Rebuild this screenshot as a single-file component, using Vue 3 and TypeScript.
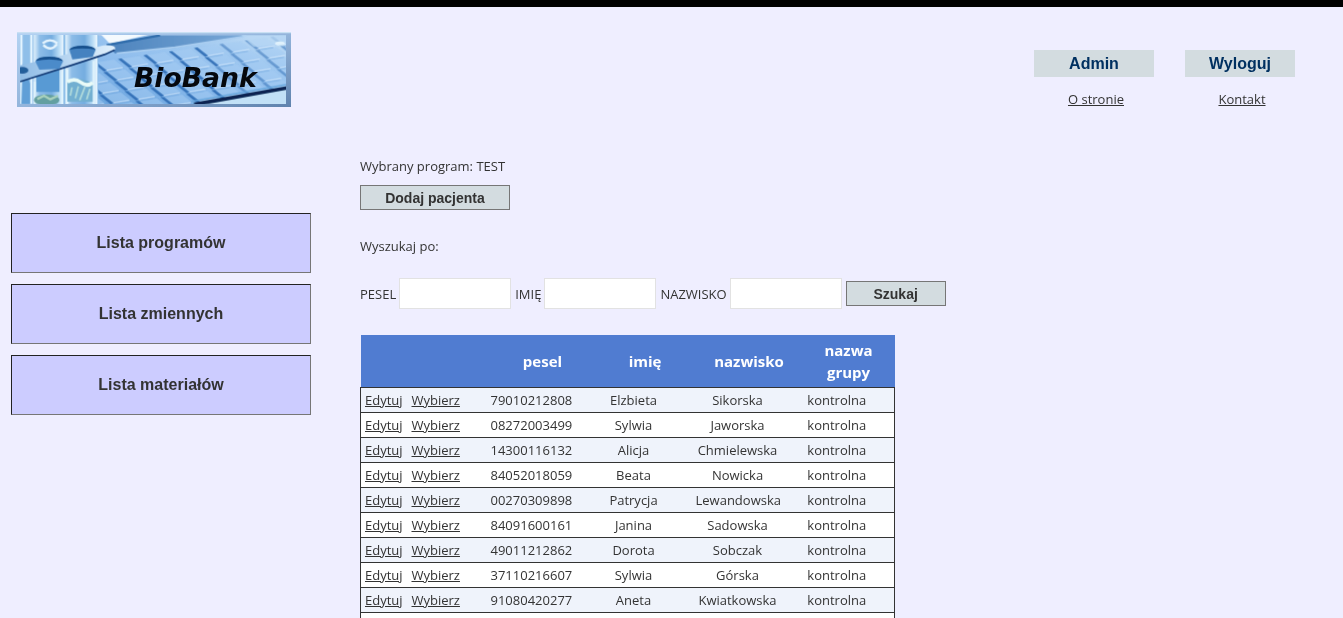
<script setup lang="ts">
import { ref } from 'vue'

interface Patient {
  pesel: string
  firstName: string
  lastName: string
  group: string
}

const menu: string[] = ['Lista programów', 'Lista zmiennych', 'Lista materiałów']

const patients: Patient[] = [
  { pesel: '79010212808', firstName: 'Elzbieta', lastName: 'Sikorska', group: 'kontrolna' },
  { pesel: '08272003499', firstName: 'Sylwia', lastName: 'Jaworska', group: 'kontrolna' },
  { pesel: '14300116132', firstName: 'Alicja', lastName: 'Chmielewska', group: 'kontrolna' },
  { pesel: '84052018059', firstName: 'Beata', lastName: 'Nowicka', group: 'kontrolna' },
  { pesel: '00270309898', firstName: 'Patrycja', lastName: 'Lewandowska', group: 'kontrolna' },
  { pesel: '84091600161', firstName: 'Janina', lastName: 'Sadowska', group: 'kontrolna' },
  { pesel: '49011212862', firstName: 'Dorota', lastName: 'Sobczak', group: 'kontrolna' },
  { pesel: '37110216607', firstName: 'Sylwia', lastName: 'Górska', group: 'kontrolna' },
  { pesel: '91080420277', firstName: 'Aneta', lastName: 'Kwiatkowska', group: 'kontrolna' },
]

const pesel = ref('')
const firstName = ref('')
const lastName = ref('')

// Keyboard keys of the banner, laid out in perspective from the upper left.
const keys: { x: number; y: number; fade: number }[] = []
for (let row = 0; row < 7; row++) {
  for (let col = -4; col < 8; col++) {
    const x = 360 + col * 76 + row * 32
    keys.push({ x, y: 180 - col * 11 + row * 29, fade: x > 640 ? 0.5 : 0.9 })
  }
}
</script>

<template>
  <div class="page">
    <header class="top">
      <a href="#" class="brand" aria-label="BioBank">
        <svg class="logo" viewBox="51 96 822 225" role="img" aria-label="BioBank">
          <defs>
            <linearGradient id="frame" x1="0" y1="0" x2="1" y2="1">
              <stop offset="0" stop-color="#b4d3f3" />
              <stop offset="0.5" stop-color="#94b5dc" />
              <stop offset="1" stop-color="#5f82ad" />
            </linearGradient>
            <linearGradient id="board" x1="0" y1="1" x2="1" y2="0">
              <stop offset="0" stop-color="#5c9bd8" />
              <stop offset="0.5" stop-color="#8dbced" />
              <stop offset="0.75" stop-color="#9fc8f0" />
              <stop offset="1" stop-color="#c4def6" />
            </linearGradient>
            <linearGradient id="tube" x1="0" y1="0" x2="1" y2="0">
              <stop offset="0" stop-color="#e4f3fd" />
              <stop offset="0.2" stop-color="#8dbde8" />
              <stop offset="0.6" stop-color="#75ade0" />
              <stop offset="0.85" stop-color="#b8dcf6" />
              <stop offset="1" stop-color="#eef8ff" />
            </linearGradient>
            <linearGradient id="rack" x1="0" y1="0" x2="1" y2="0">
              <stop offset="0" stop-color="#8fbce6" />
              <stop offset="1" stop-color="#e2f1fd" />
            </linearGradient>
            <linearGradient id="lid" x1="0" y1="0" x2="1" y2="0">
              <stop offset="0" stop-color="#4c83bd" />
              <stop offset="1" stop-color="#7aa9d8" />
            </linearGradient>
            <filter id="soft" x="-5%" y="-5%" width="110%" height="110%">
              <feGaussianBlur stdDeviation="2" />
            </filter>
            <clipPath id="photo"><rect x="60" y="107" width="798" height="205" /></clipPath>
          </defs>
          <rect x="51" y="96" width="822" height="225" fill="url(#frame)" />
          <path d="M51 98H873" stroke="#c9e0f3" stroke-width="4" />
          <g clip-path="url(#photo)">
            <rect x="60" y="107" width="798" height="205" fill="url(#board)" />
            <g filter="url(#soft)">
              <g v-for="(key, i) in keys" :key="i" :transform="`translate(${key.x} ${key.y})`">
                <path d="M6 -4L58 -12L86 10L36 19Z" fill="#a6ccf3" opacity="0.55" />
                <path d="M36 20L84 12" stroke="#c8e0f8" stroke-width="4" opacity="0.8" />
                <path d="M36 25L80 18" stroke="#6ba3dc" stroke-width="3" opacity="0.7" />
                <path d="M-6 -3L4 -5L36 20L28 24Z" fill="#2d6bb4" :opacity="key.fade" />
              </g>
              <path d="M300 100H460L330 132Z" fill="#f4fafe" />
              <path d="M318 134L470 106H745L525 144L345 160Z" fill="url(#lid)" />
              <path d="M320 135L480 106" stroke="#2f6cab" stroke-width="7" />
              <path d="M350 160L525 142L740 108" fill="none" stroke="#a9cdf0" stroke-width="5" />
              <path d="M720 100H870V130L760 140Z" fill="#b8d7f3" opacity="0.7" />
              <ellipse cx="840" cy="130" rx="15" ry="6" fill="#e0f1fc" />
              <path d="M575 318L870 263V325H575Z" fill="#c1e0f6" />
              <path d="M580 308L865 258V268L590 318Z" fill="#082451" />
              <path d="M575 304L862 253" stroke="#66a6dc" stroke-width="4" />

              <rect x="55" y="100" width="240" height="220" fill="#8fbfe9" />
              <path d="M64 100V312M94 100V312" stroke="#e3f4ff" stroke-width="7" />
              <path d="M68 190L90 250V312H64Z" fill="#609fd7" />
              <rect x="101" y="100" width="89" height="215" fill="url(#tube)" />
              <rect x="196" y="100" width="96" height="215" fill="url(#tube)" />
              <path d="M128 130Q150 112 172 130M130 135Q153 157 171 132" fill="none" stroke="#e6f5fe" stroke-width="7" />
              <path d="M109 208L178 185V276H109Z" fill="#589ad4" />
              <path d="M60 196L310 136Q350 134 345 148Q335 157 60 245Z" fill="url(#rack)" />
              <path d="M60 245L205 199L315 163L344 150" fill="none" stroke="#173f79" stroke-width="5" />
              <path d="M106 184Q112 171 147 171Q183 171 189 184L178 207L118 209Z" fill="#4b8bca" />
              <path d="M107 183Q112 170 147 170Q183 170 189 183Q148 174 107 183Z" fill="#174f8c" />
              <path d="M208 149Q216 138 248 138Q280 138 287 149L278 171L217 178Z" fill="#4482c0" />
              <path d="M208 149Q216 137 248 137Q280 137 287 149Q248 141 208 149Z" fill="#174f8c" />
              <ellipse cx="67" cy="211" rx="18" ry="10" fill="#245e9b" />
              <path d="M104 245V310M187 216V312M202 208V312M281 183V312" stroke="#e1f4fd" stroke-width="6" />
              <path d="M202 246Q235 225 278 250V305H202Z" fill="#72afd1" />
              <path d="M202 246Q223 232 242 247T278 248" fill="none" stroke="#e9fbf8" stroke-width="11" />
              <path d="M216 262L211 287M235 259L226 295M255 260L239 301M270 266L260 298" stroke="#b4dddd" stroke-width="5" />
              <ellipse cx="140" cy="300" rx="38" ry="17" fill="#649fa1" />
              <path d="M112 297L132 287L151 298L174 287" fill="none" stroke="#a9d2bd" stroke-width="7" />
            </g>
          </g>
          <text x="402" y="262" class="logo-text">BioBank</text>
        </svg>
      </a>
      <nav class="account" aria-label="Konto">
        <div class="account-col">
          <button type="button" class="account-btn admin">Admin</button>
          <a href="#">O stronie</a>
        </div>
        <div class="account-col">
          <button type="button" class="account-btn logout">Wyloguj</button>
          <a href="#">Kontakt</a>
        </div>
      </nav>
    </header>

    <div class="body">
      <nav class="sidebar" aria-label="Menu">
        <button v-for="item in menu" :key="item" type="button" class="menu-btn">{{ item }}</button>
      </nav>

      <main class="content">
        <p class="line">Wybrany program: TEST</p>
        <button type="button" class="action add">Dodaj pacjenta</button>
        <p class="line search-title">Wyszukaj po:</p>
        <form class="search" @submit.prevent>
          <label for="pesel">PESEL</label>
          <input id="pesel" v-model="pesel" type="text" />
          <label for="first-name">IMIĘ</label>
          <input id="first-name" v-model="firstName" type="text" />
          <label for="last-name">NAZWISKO</label>
          <input id="last-name" v-model="lastName" type="text" />
          <button type="submit" class="action find">Szukaj</button>
        </form>

        <table class="patients">
          <colgroup>
            <col class="c-edit" />
            <col class="c-pick" />
            <col class="c-pesel" />
            <col class="c-first" />
            <col class="c-last" />
            <col class="c-group" />
          </colgroup>
          <thead>
            <tr>
              <th></th>
              <th></th>
              <th scope="col">pesel</th>
              <th scope="col">imię</th>
              <th scope="col">nazwisko</th>
              <th scope="col">nazwa grupy</th>
            </tr>
          </thead>
          <tbody>
            <tr v-for="p in patients" :key="p.pesel">
              <td class="link"><a href="#">Edytuj</a></td>
              <td class="link"><a href="#">Wybierz</a></td>
              <td>{{ p.pesel }}</td>
              <td>{{ p.firstName }}</td>
              <td>{{ p.lastName }}</td>
              <td>{{ p.group }}</td>
            </tr>
            <tr>
              <td colspan="6"></td>
            </tr>
          </tbody>
        </table>
      </main>
    </div>
  </div>
</template>

<style>
body {
  background: #efeeff;
}
</style>

<style scoped>
.page {
  box-sizing: border-box;
  height: 100vh;
  overflow: hidden;
  border-top: 7px solid #000;
  background: #efeeff;
  color: #333;
  font: 13px/20px "Open Sans", "Noto Sans", sans-serif;
}

a {
  color: #333;
}

.top {
  display: flex;
  justify-content: space-between;
  align-items: flex-start;
  padding: 25px 48px 0 17px;
}

.brand,
.logo {
  display: block;
}

.logo {
  width: 274px;
  height: 75px;
}

.logo-text {
  font: italic bold 80px "DejaVu Sans", sans-serif;
  fill: #05080d;
}

.account {
  display: flex;
  gap: 31px;
  padding-top: 18px;
}

.account-col {
  display: flex;
  flex-direction: column;
  align-items: center;
  gap: 12px;
}

.account-col a {
  padding-left: 4px;
}

.account-btn {
  height: 27px;
  padding: 0;
  border: 0;
  background: #d3dce0;
  color: #003060;
  font: bold 16px "Liberation Sans", sans-serif;
}

.admin {
  width: 120px;
}

.logout {
  width: 110px;
}

.body {
  display: flex;
  align-items: flex-start;
  gap: 49px;
  padding: 47px 11px 0;
}

.sidebar {
  display: flex;
  flex: 0 0 300px;
  flex-direction: column;
  gap: 11px;
  padding-top: 57px;
}

.menu-btn {
  height: 60px;
  padding: 0;
  border: 1px solid;
  border-color: #222 #767676 #767676 #222;
  background: #ccccff;
  color: #333;
  font: bold 16px "Liberation Sans", sans-serif;
}

.content {
  flex: 1;
  min-width: 0;
}

.line {
  margin: 0;
}

.action {
  box-sizing: border-box;
  display: block;
  height: 25px;
  padding: 0;
  border: 1px solid #767676;
  background: #d3dce0;
  color: #333;
  font: bold 14px "Liberation Sans", sans-serif;
}

.add {
  width: 150px;
  margin-top: 9px;
}

.find {
  width: 100px;
}

.search-title {
  margin-top: 26px;
}

.search {
  display: flex;
  align-items: center;
  gap: 4px;
  margin: 22px 0 26px;
}

.search input {
  box-sizing: border-box;
  width: 112px;
  height: 31px;
  padding: 4px;
  border: 1px solid #e2e2e2;
  background: #fff;
  color: #333;
  font: inherit;
}

.search label {
  margin-right: -1px;
}

.patients {
  width: 534px;
  table-layout: fixed;
  border-collapse: collapse;
}

.c-edit {
  width: 47px;
}

.c-pick {
  width: 83px;
}

.c-pesel {
  width: 104px;
}

.c-first {
  width: 101px;
}

.c-last {
  width: 107px;
}

.c-group {
  width: 92px;
}

th {
  height: 52px;
  padding: 0 16px;
  background: #507cd1;
  color: #fff;
  font-size: 15px;
  font-weight: 700;
  line-height: 22px;
}

th:nth-child(5) {
  padding: 0;
}

tbody {
  border: 1px solid #333;
  background: #fff;
}

tbody tr {
  height: 25px;
  border-bottom: 1px solid #333;
}

tbody tr:nth-child(odd) {
  background: #eff3fb;
}

td {
  height: 20px;
  padding: 2px 23px 2px 0;
  text-align: center;
  white-space: nowrap;
}

td.link {
  padding-left: 4px;
  padding-right: 0;
  text-align: left;
}
</style>
